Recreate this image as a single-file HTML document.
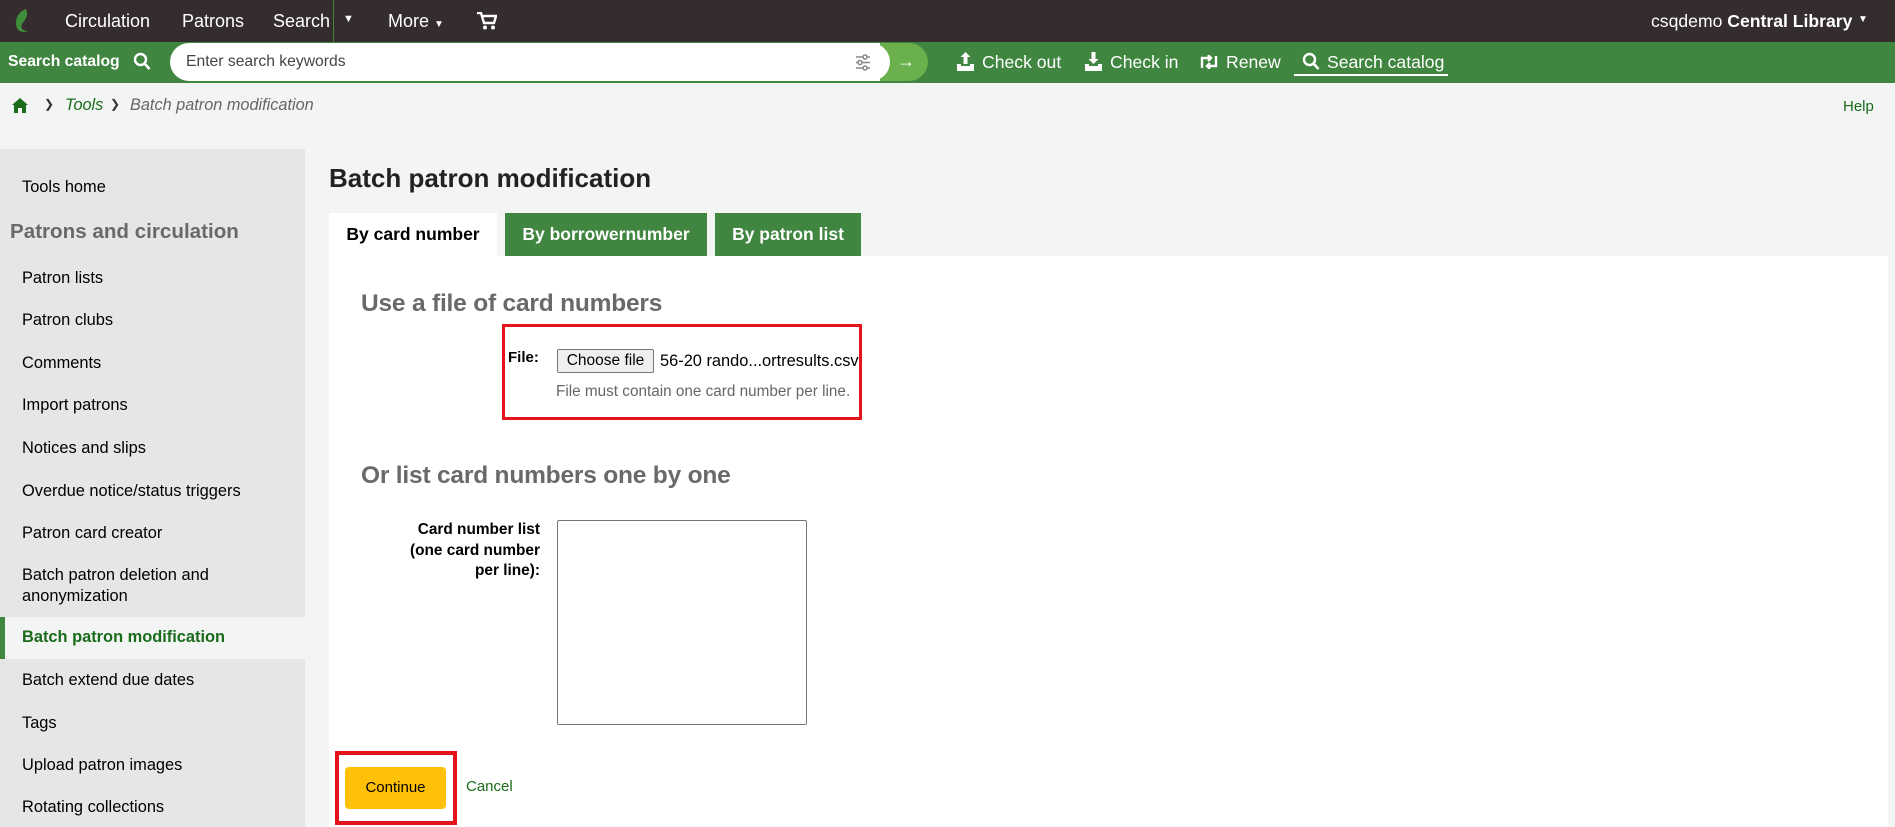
<!DOCTYPE html>
<html><head><meta charset="utf-8"><style>
*{box-sizing:border-box;margin:0;padding:0}
body{width:1895px;height:827px;overflow:hidden;background:#f3f4f4;font-family:"Liberation Sans",sans-serif;position:relative;color:#000}
.a{position:absolute;white-space:nowrap}
#top{position:absolute;left:0;top:0;width:1895px;height:42px;background:#342c2d;color:#fff;font-size:18px}
#sb{position:absolute;left:0;top:42px;width:1895px;height:41px;background:#408540}
#side{position:absolute;left:0;top:149px;width:305px;height:678px;background:#e6e6e6}
.si{position:absolute;left:22px;font-size:16.4px;color:#000}
.tab{position:absolute;top:213px;height:43px;font-weight:bold;font-size:17.5px;color:#fff;background:#408540;text-align:center;line-height:43px}
h3{position:absolute;font-size:24.5px;color:#696969;font-weight:bold;white-space:nowrap;letter-spacing:-0.2px}
</style></head><body>
<div id="top">
 <svg class="a" style="left:12px;top:8px" width="22" height="26" viewBox="0 0 22 26"><path d="M14 1C6 4 2 12 5 20c2 4 7 5 11 3-5 0-8-3-6-7 3-4 7-8 4-15z" fill="#3f8f3a"/></svg>
 <span class="a" style="left:65px;top:11px">Circulation</span>
 <span class="a" style="left:182px;top:11px">Patrons</span>
 <span class="a" style="left:273px;top:11px">Search</span>
 <div class="a" style="left:333px;top:0;width:1px;height:42px;background:#408540"></div>
 <span class="a" style="left:343px;top:13px;font-size:11px">▼</span>
 <span class="a" style="left:388px;top:11px">More <span style="font-size:10px">▼</span></span>
 <svg class="a" style="left:477px;top:12px" width="20" height="18" viewBox="0 0 20 18"><path d="M0 1h4l3 10h10l2-7H6" fill="none" stroke="#fff" stroke-width="2.4"/><circle cx="8" cy="15.5" r="2" fill="#fff"/><circle cx="16" cy="15.5" r="2" fill="#fff"/></svg>
 <span class="a" style="left:1651px;top:11px;font-size:17.6px">csqdemo <b>Central Library</b></span>
 <span class="a" style="left:1858px;top:14px;font-size:10px">▼</span>
</div>
<div id="sb">
 <span class="a" style="left:8px;top:11px;color:#fff;font-weight:bold;font-size:15.7px">Search catalog</span>
 <svg class="a" style="left:133px;top:10px" width="18" height="19" viewBox="0 0 18 19"><circle cx="7.5" cy="7.5" r="5.5" fill="none" stroke="#fff" stroke-width="2.4"/><path d="M11.5 11.5l5 5.5" stroke="#fff" stroke-width="2.6"/></svg>
 <div class="a" style="left:170px;top:1px;width:740px;height:38px;background:#fff;border-radius:20px"></div>
 <span class="a" style="left:186px;top:11px;color:#444;font-size:15.7px">Enter search keywords</span>
 <svg class="a" style="left:855px;top:12px" width="16" height="17" viewBox="0 0 16 17" stroke="#888" stroke-width="1.5" fill="none"><path d="M1 3h14M1 8.5h14M1 14h14"/><circle cx="10" cy="3" r="2" fill="#fff"/><circle cx="5" cy="8.5" r="2" fill="#fff"/><circle cx="10" cy="14" r="2" fill="#fff"/></svg>
 <div class="a" style="left:880px;top:1px;width:48px;height:38px;background:#6ab04c;border-radius:0 20px 20px 0"></div>
 <div class="a" style="left:870px;top:1px;width:20px;height:38px;background:#fff;border-radius:0 20px 20px 0"></div>
 <span class="a" style="left:897px;top:9px;color:#fff;font-size:18px;font-weight:bold">→</span>
 <svg class="a" style="left:957px;top:10px" width="17" height="19" viewBox="0 0 17 19" fill="#fff"><path d="M8.5 0l5 5h-3v7h-4V5h-3z"/><path d="M0 12h4v2h9v-2h4v7H0z"/></svg>
 <span class="a" style="left:982px;top:10px;color:#fff;font-size:17.6px">Check out</span>
 <svg class="a" style="left:1085px;top:10px" width="17" height="19" viewBox="0 0 17 19" fill="#fff"><path d="M8.5 12l5-5h-3V0h-4v7h-3z"/><path d="M0 12h4v2h9v-2h4v7H0z"/></svg>
 <span class="a" style="left:1110px;top:10px;color:#fff;font-size:17.6px">Check in</span>
 <svg class="a" style="left:1200px;top:13px" width="18" height="14" viewBox="0 0 18 14" fill="none" stroke="#fff" stroke-width="2.4"><path d="M2 13V3h9M8 0l3 3-3 3M16 1v10H7M10 14l-3-3 3-3"/></svg>
 <span class="a" style="left:1226px;top:10px;color:#fff;font-size:17.6px">Renew</span>
 <svg class="a" style="left:1302px;top:10px" width="18" height="19" viewBox="0 0 18 19"><circle cx="7.5" cy="7.5" r="5.5" fill="none" stroke="#fff" stroke-width="2.4"/><path d="M11.5 11.5l5 5.5" stroke="#fff" stroke-width="2.6"/></svg>
 <span class="a" style="left:1327px;top:10px;color:#fff;font-size:17.6px">Search catalog</span>
 <div class="a" style="left:1294px;top:32px;width:154px;height:2px;background:#fff"></div>
</div>
<svg class="a" style="left:12px;top:98px" width="16" height="15" viewBox="0 0 16 15" fill="#1a6b1a"><path d="M8 0l8 7h-2v8h-4v-5H6v5H2V7H0z"/></svg>
<span class="a" style="left:44px;top:97px;font-size:12px;color:#333">❯</span>
<span class="a" style="left:65px;top:96px;font-size:16.3px;font-style:italic;color:#1a6b1a">Tools</span>
<span class="a" style="left:110px;top:97px;font-size:12px;color:#333">❯</span>
<span class="a" style="left:130px;top:96px;font-size:16.3px;font-style:italic;color:#666">Batch patron modification</span>
<span class="a" style="left:1843px;top:98px;font-size:15px;color:#1a6b1a">Help</span>

<div id="side"></div>
<div class="a" style="left:0;top:617px;width:305px;height:42px;background:#f3f4f4"></div>
<div class="a" style="left:0;top:617px;width:5px;height:42px;background:#408540"></div>
<div class="si a" style="top:178px">Tools home</div>
<div class="a" style="left:10px;top:220px;font-size:20.6px;font-weight:bold;color:#696969">Patrons and circulation</div>
<div class="si a" style="top:269px">Patron lists</div>
<div class="si a" style="top:311px">Patron clubs</div>
<div class="si a" style="top:354px">Comments</div>
<div class="si a" style="top:396px">Import patrons</div>
<div class="si a" style="top:439px">Notices and slips</div>
<div class="si a" style="top:482px">Overdue notice/status triggers</div>
<div class="si a" style="top:524px">Patron card creator</div>
<div class="si a" style="top:566px">Batch patron deletion and</div>
<div class="si a" style="top:587px">anonymization</div>
<div class="si a" style="top:628px;font-weight:bold;color:#1a6b1a">Batch patron modification</div>
<div class="si a" style="top:671px">Batch extend due dates</div>
<div class="si a" style="top:714px">Tags</div>
<div class="si a" style="top:756px">Upload patron images</div>
<div class="si a" style="top:798px">Rotating collections</div>

<div class="a" style="left:329px;top:163px;font-size:26px;font-weight:bold;color:#222">Batch patron modification</div>
<div class="a" style="left:329px;top:256px;width:1559px;height:571px;background:#fff"></div>
<div class="tab" style="left:329px;width:168px;background:#fff;color:#000">By card number</div>
<div class="tab" style="left:505px;width:202px">By borrowernumber</div>
<div class="tab" style="left:715px;width:146px">By patron list</div>

<h3 style="left:361px;top:290px">Use a file of card numbers</h3>
<div class="a" style="left:502px;top:324px;width:360px;height:96px;border:3px solid #e3141b"></div>
<span class="a" style="left:508px;top:349px;font-size:15px;font-weight:bold">File:</span>
<div class="a" style="left:557px;top:349px;width:97px;height:24px;background:#efefef;border:1px solid #767676;border-radius:2px;font-size:15.5px;text-align:center;line-height:22px">Choose file</div>
<span class="a" style="left:660px;top:352px;font-size:16.4px">56-20 rando...ortresults.csv</span>
<span class="a" style="left:556px;top:383px;font-size:15.3px;color:#666">File must contain one card number per line.</span>

<h3 style="left:361px;top:462px">Or list card numbers one by one</h3>
<div class="a" style="left:360px;top:520px;width:180px;font-size:15.4px;font-weight:bold;text-align:right;line-height:20.5px;white-space:normal">Card number list<br>(one card number<br>per line):</div>
<div class="a" style="left:557px;top:520px;width:250px;height:205px;border:1px solid #767676;border-radius:2px;background:#fff"></div>
<div class="a" style="left:335px;top:751px;width:122px;height:74px;border:4px solid #e3141b"></div>
<div class="a" style="left:345px;top:767px;width:101px;height:42px;background:#ffc107;border-radius:4px;font-size:15px;text-align:center;line-height:42px">Continue</div>
<span class="a" style="left:466px;top:778px;font-size:15px;color:#1a6b1a">Cancel</span>
</body></html>
